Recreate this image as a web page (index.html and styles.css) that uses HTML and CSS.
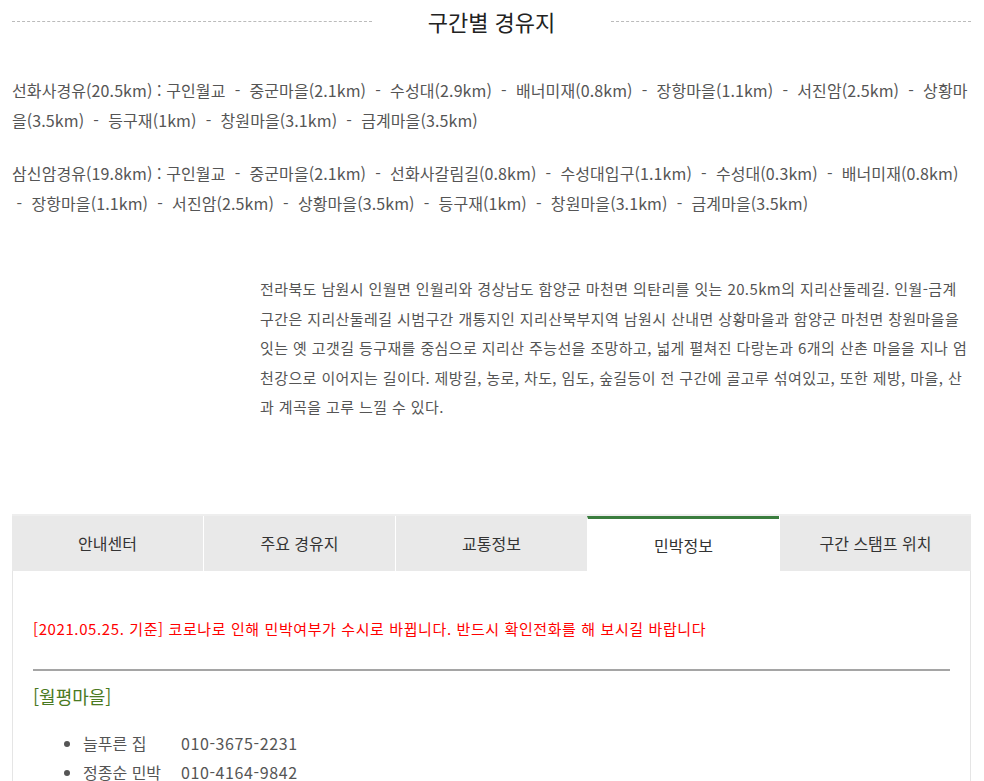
FILE: index.html
```html
<!DOCTYPE html>
<html lang="ko">
<head>
    <meta charset="UTF-8">
    <meta name="viewport" content="width=device-width, initial-scale=1.0">
    <title>구간별 경유지</title>
    <link rel="stylesheet" href="styles.css">
</head>
<body>
    <div class="wrap">
        <div class="sec-title">
            <span class="sec-line"></span>
            <h2>구간별 경유지</h2>
            <span class="sec-line"></span>
        </div>

        <div class="route">
            <p>선화사경유(20.5km) : 구인월교 &nbsp;-&nbsp; 중군마을(2.1km) &nbsp;-&nbsp; 수성대(2.9km) &nbsp;-&nbsp; 배너미재(0.8km) &nbsp;-&nbsp; 장항마을(1.1km) &nbsp;-&nbsp; 서진암(2.5km) &nbsp;-&nbsp; 상황마을(3.5km) &nbsp;-&nbsp; 등구재(1km) &nbsp;-&nbsp; 창원마을(3.1km) &nbsp;-&nbsp; 금계마을(3.5km)</p>
            <p>삼신암경유(19.8km) : 구인월교 &nbsp;-&nbsp; 중군마을(2.1km) &nbsp;-&nbsp; 선화사갈림길(0.8km) &nbsp;-&nbsp; 수성대입구(1.1km) &nbsp;-&nbsp; 수성대(0.3km) &nbsp;-&nbsp; 배너미재(0.8km) &nbsp;-&nbsp; 장항마을(1.1km) &nbsp;-&nbsp; 서진암(2.5km) &nbsp;-&nbsp; 상황마을(3.5km) &nbsp;-&nbsp; 등구재(1km) &nbsp;-&nbsp; 창원마을(3.1km) &nbsp;-&nbsp; 금계마을(3.5km)</p>
        </div>

        <div class="intro">
            <p>전라북도 남원시 인월면 인월리와 경상남도 함양군 마천면 의탄리를 잇는 20.5km의 지리산둘레길. 인월-금계 구간은 지리산둘레길 시범구간 개통지인 지리산북부지역 남원시 산내면 상황마을과 함양군 마천면 창원마을을 잇는 옛 고갯길 등구재를 중심으로 지리산 주능선을 조망하고, 넓게 펼쳐진 다랑논과 6개의 산촌 마을을 지나 엄천강으로 이어지는 길이다. 제방길, 농로, 차도, 임도, 숲길등이 전 구간에 골고루 섞여있고, 또한 제방, 마을, 산과 계곡을 고루 느낄 수 있다.</p>
        </div>

        <div class="tabs">
            <ul class="tab-menu">
                <li><a href="#">안내센터</a></li>
                <li><a href="#">주요 경유지</a></li>
                <li><a href="#">교통정보</a></li>
                <li class="on"><a href="#">민박정보</a></li>
                <li><a href="#">구간 스탬프 위치</a></li>
            </ul>
            <div class="tab-body">
                <p class="notice">[2021.05.25. 기준] 코로나로 인해 민박여부가 수시로 바뀝니다. 반드시 확인전화를 해 보시길 바랍니다</p>
                <h3 class="village">[월평마을]</h3>
                <ul class="stay-list">
                    <li><span class="stay-name">늘푸른 집</span>010-3675-2231</li>
                    <li><span class="stay-name">정종순 민박</span>010-4164-9842</li>
                </ul>
            </div>
        </div>
    </div>
</body>
</html>
```

FILE: styles.css
```css
body {
    margin: 0;
    padding: 0;
    font-family: "Noto Sans CJK KR", "Noto Sans", sans-serif;
    color: #555;
    background: #fff;
}

.wrap {
    width: 959px;
    margin: 0 12px;
}

/* 제목 */
.sec-title {
    display: flex;
    align-items: center;
    height: 42px;
}

.sec-line {
    flex: 1;
    border-top: 1px dashed #bbb;
}

.sec-title h2 {
    margin: 0;
    padding: 0 56px;
    font-size: 22px;
    font-weight: 400;
    color: #222;
}

/* 경유지 */
.route {
    margin-top: 33px;
}

.route p {
    margin: 0 0 23px;
    font-size: 16px;
    line-height: 30px;
    letter-spacing: 0.1px;
}

.intro {
    margin: 56px 0 0 248px;
}

.intro p {
    margin: 0;
    font-size: 15px;
    line-height: 29.6px;
    letter-spacing: 0.4px;
}

/* 탭 */
.tabs {
    margin-top: 92px;
    border-top: 2px solid #eee;
}

.tab-menu {
    display: flex;
    margin: 0;
    padding: 0;
    list-style: none;
}

.tab-menu li {
    flex: 1;
    background: #e9e9e9;
    border-left: 1px solid #fff;
}

.tab-menu li:first-child {
    border-left: 0;
}

.tab-menu li a {
    display: block;
    height: 55px;
    line-height: 55px;
    text-align: center;
    font-size: 16px;
    color: #333;
    text-decoration: none;
}

.tab-menu li.on {
    background: #fff;
    border-top: 3px solid #3a7d3e;
}

.tab-menu li.on a {
    height: 52px;
    line-height: 52px;
}

.tab-body {
    border-left: 1px solid #e5e5e5;
    border-right: 1px solid #e5e5e5;
    padding: 40px 20px 0;
}

.notice {
    margin: 0;
    padding: 4px 0 26px;
    font-size: 15px;
    line-height: 28px;
    color: #ff0000;
    letter-spacing: 0.6px;
    border-bottom: 2px solid #a5a5a5;
}

.village {
    margin: 10px 0 0;
    font-size: 18px;
    font-weight: 400;
    line-height: 30px;
    color: #4a7a22;
}

.stay-list {
    margin: 18px 0 0;
    padding-left: 50px;
    font-size: 16px;
    line-height: 29px;
    letter-spacing: 0.6px;
}

.stay-name {
    display: inline-block;
    width: 98px;
    letter-spacing: 0;
}
```
